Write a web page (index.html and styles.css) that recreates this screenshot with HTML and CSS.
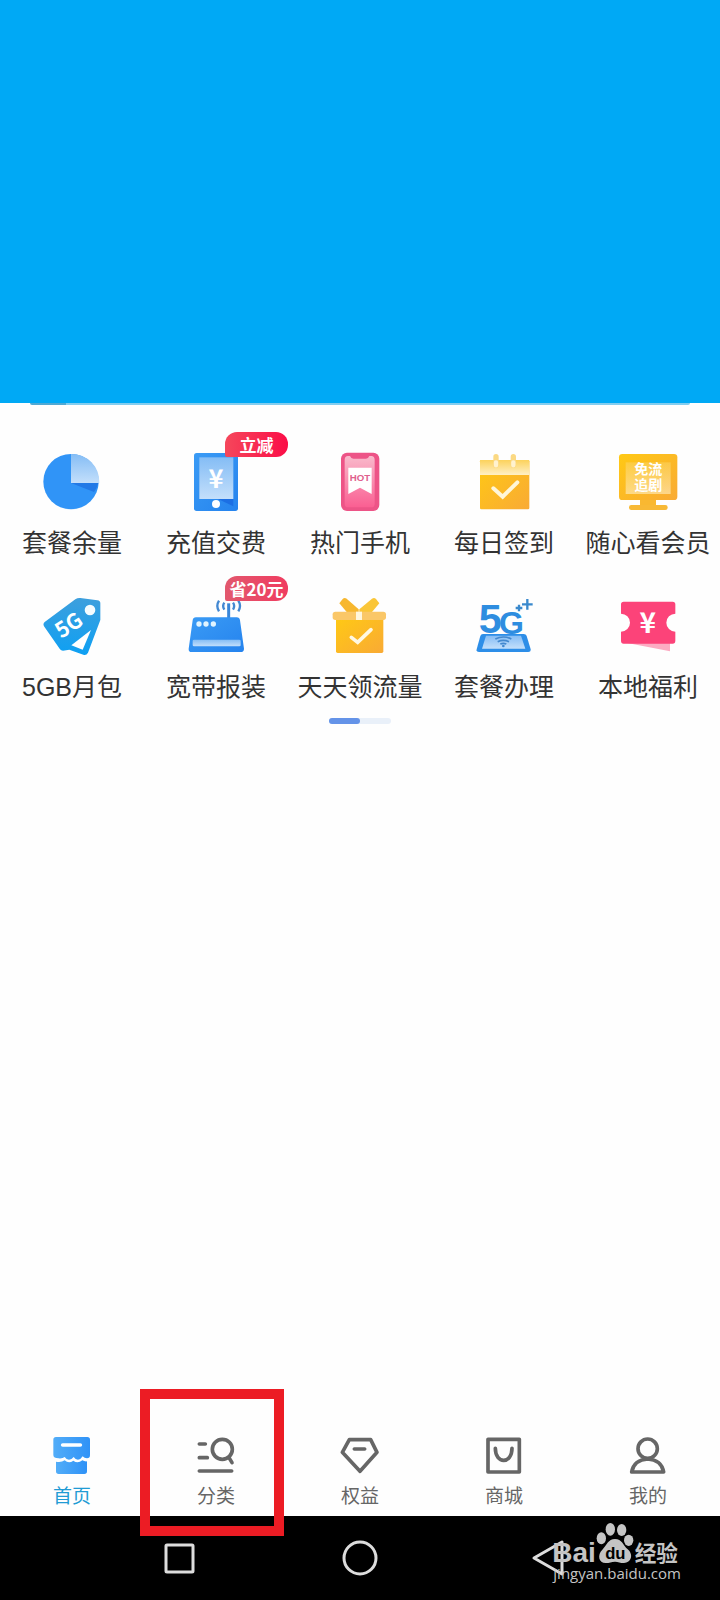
FILE: index.html
```html
<!DOCTYPE html>
<html lang="zh-CN">
<head>
  <meta charset="UTF-8">
  <meta name="viewport" content="width=device-width, initial-scale=1.0">
  <title>首页</title>
  <link rel="stylesheet" href="styles.css">
</head>
<body>

  <!-- Degradados compartidos por los iconos -->
  <svg class="defs" width="0" height="0" aria-hidden="true">
    <defs>
      <linearGradient id="blue" x1="0" y1="0" x2="1" y2="1"><stop offset="0" stop-color="#3a9bf5"/><stop offset="1" stop-color="#2583ee"/></linearGradient>
      <linearGradient id="cyan" x1="0" y1="0" x2="0" y2="1"><stop offset="0" stop-color="#3d9fdd"/><stop offset="1" stop-color="#0ea0f3"/></linearGradient>
      <linearGradient id="pale" x1="0" y1="0" x2="0" y2="1"><stop offset="0" stop-color="#85bdf5"/><stop offset="1" stop-color="#c3dffb"/></linearGradient>
      <linearGradient id="gold" x1="0" y1="0" x2="1" y2="1"><stop offset="0" stop-color="#ffc914"/><stop offset="1" stop-color="#f9aa35"/></linearGradient>
      <linearGradient id="cream" x1="0" y1="0" x2="0" y2="1"><stop offset="0" stop-color="#fcd25c"/><stop offset="1" stop-color="#fff0c6"/></linearGradient>
      <linearGradient id="pink" x1="0" y1="0" x2="0" y2="1"><stop offset="0" stop-color="#f9b9cb"/><stop offset="1" stop-color="#fa5f92"/></linearGradient>
      <linearGradient id="home" x1="0" y1="0" x2="1" y2="0"><stop offset="0" stop-color="#52adf8"/><stop offset="1" stop-color="#2f92f7"/></linearGradient>
    </defs>
  </svg>

  <header class="banner"></header>

  <main class="content">
    <div class="card-edge"></div>
    <div class="services">
      <button type="button" class="service">
        <span class="icon">
          <svg viewBox="0 0 180 180">
            <circle cx="87" cy="89" r="83" fill="#3094f7"/>
            <path d="M87 93H169Q165 108 156 120Z" fill="#2279e6"/>
            <path d="M87 6A83 83 0 0 1 172 93H87Z" fill="url(#pale)"/>
          </svg>
        </span>
        <span class="label">套餐余量</span>
      </button>
      <button type="button" class="service">
        <span class="icon">
          <svg viewBox="0 0 180 180">
            <rect x="24" y="3" width="132" height="174" rx="8" fill="url(#blue)"/>
            <path d="M96 141H142V163Z" fill="#1c6fe4"/>
            <rect x="40" y="16" width="102" height="125" fill="url(#pale)"/>
            <text x="90" y="107" font-size="76" class="mark">¥</text>
            <circle cx="90" cy="156" r="12" fill="#fff"/>
          </svg>
          <span class="badge">立减</span>
        </span>
        <span class="label">充值交费</span>
      </button>
      <button type="button" class="service">
        <span class="icon">
          <svg viewBox="0 0 180 180">
            <rect x="33" y="2" width="115" height="175" rx="18" fill="#ed5487"/>
            <path d="M44 24Q44 12 54 12H60Q63 20 70 20H108Q115 20 118 12H124Q134 12 134 24V155Q134 166 124 166H54Q44 166 44 155Z" fill="url(#pink)"/>
            <path d="M55 47H125V126L90 107L55 126Z" fill="#fff"/>
            <text x="90" y="87" font-size="29" class="mark hot">HOT</text>
          </svg>
        </span>
        <span class="label">热门手机</span>
      </button>
      <button type="button" class="service">
        <span class="icon">
          <svg viewBox="0 0 180 180">
            <rect x="18" y="24" width="148" height="148" rx="4" fill="url(#gold)"/>
            <path d="M22 24H162Q166 24 166 28V69H18V28Q18 24 22 24Z" fill="url(#cream)"/>
            <path d="M66 14V40M118 14V40" stroke="#fbd983" stroke-width="16" stroke-linecap="round"/>
            <path d="M66 31V40M118 31V40" stroke="#fff2cf" stroke-width="13" stroke-linecap="round"/>
            <path d="M58 109L86 134L130 91" fill="none" stroke="#fff6d8" stroke-width="12" stroke-linecap="round"/>
          </svg>
        </span>
        <span class="label">每日签到</span>
      </button>
      <button type="button" class="service">
        <span class="icon">
          <svg viewBox="0 0 180 180">
            <path d="M66 140H114V160H66Z" fill="#f9b831"/>
            <rect x="33" y="159" width="116" height="15" rx="7" fill="#f8b936"/>
            <rect x="3" y="6" width="175" height="138" rx="10" fill="url(#gold)"/>
            <rect x="23" y="31" width="135" height="95" fill="url(#cream)" opacity=".6"/>
            <text x="91" y="67" font-size="42" class="mark">免流</text>
            <text x="91" y="114" font-size="42" class="mark">追剧</text>
          </svg>
        </span>
        <span class="label">随心看会员</span>
      </button>
      <button type="button" class="service">
        <span class="icon">
          <svg viewBox="0 0 180 180">
            <path d="M8 78L100 10Q107 5 115 6L166 13Q175 14 175 22V72L138 170Q133 179 124 176L82 161L63 164Q57 164 54 160L6 91Q2 83 8 78Z" fill="url(#cyan)"/>
            <circle cx="144" cy="42" r="16" fill="#f4fcff"/>
            <path d="M147 102L88 148L122 161Z" fill="#fff"/>
            <text x="80" y="110" font-size="64" class="mark" transform="rotate(-33 80 87)">5G</text>
          </svg>
        </span>
        <span class="label">5GB月包</span>
      </button>
      <button type="button" class="service">
        <span class="icon">
          <svg viewBox="0 0 180 180">
            <path d="M128 22V68" stroke="#3a86d8" stroke-width="9"/>
            <path d="M115 20Q108 30 115 41M99 14Q89 30 99 46M141 20Q148 30 141 41M157 14Q167 30 157 46" fill="none" stroke="#4388d2" stroke-width="7"/>
            <path d="M30 64H152Q161 64 162 73L174 158Q174 168 164 168H17Q7 168 8 158L20 73Q21 64 30 64Z" fill="url(#blue)"/>
            <circle cx="39" cy="84" r="8" fill="#e0f4ff"/><circle cx="60" cy="84" r="8" fill="#e0f4ff"/><circle cx="82" cy="84" r="8" fill="#e0f4ff"/>
            <rect x="20" y="131" width="144" height="20" rx="4" fill="url(#pale)"/>
          </svg>
          <span class="badge soft">省20元</span>
        </span>
        <span class="label">宽带报装</span>
      </button>
      <button type="button" class="service">
        <span class="icon">
          <svg viewBox="0 0 180 180">
            <rect x="18" y="66" width="142" height="105" rx="5" fill="url(#gold)"/>
            <path d="M28 22L38 9Q43 4 50 8L86 40V48H50Z" fill="#f7b72e"/>
            <path d="M148 22L138 9Q133 4 126 8L88 40V48H126Z" fill="#fac638"/>
            <rect x="8" y="47" width="160" height="25" rx="8" fill="#fac768"/>
            <path d="M78 47H96V72H78Z" fill="#fff6dd"/>
            <path d="M64 124L83 139L123 101" fill="none" stroke="#fff8e2" stroke-width="11" stroke-linecap="round"/>
          </svg>
        </span>
        <span class="label">天天领流量</span>
      </button>
      <button type="button" class="service">
        <span class="icon">
          <svg viewBox="0 0 180 180">
            <path d="M27 114H149Q156 114 158 120L170 160Q171 168 163 168H15Q6 168 8 160L19 120Q21 114 27 114Z" fill="#2d8ee8"/>
            <path d="M36 119H141L154 158H24Z" fill="url(#pale)"/>
            <path d="M64 129Q88 117 112 129M71 137Q88 129 105 137M79 144Q88 140 97 144" fill="none" stroke="#4389cf" stroke-width="5"/>
            <circle cx="88" cy="150" r="4" fill="#4389cf"/>
            <text x="49" y="110" font-size="124" class="mark five">5</text>
            <text x="112" y="113" font-size="96" class="mark five">G</text>
            <path d="M135 26V46M125 36H145M160 9V41M144 25H176" stroke="#3a89cd" stroke-width="7"/>
          </svg>
        </span>
        <span class="label">套餐办理</span>
      </button>
      <button type="button" class="service">
        <span class="icon">
          <svg viewBox="0 0 180 180">
            <path d="M24 140L156 166V138Z" fill="#fcabc2"/>
            <path d="M17 17H164Q172 17 172 25V53A27 27 0 0 0 172 107V134Q172 143 164 143H17Q9 143 9 134V107A27 27 0 0 0 9 53V25Q9 17 17 17Z" fill="#fc4379"/>
            <text x="89" y="111" font-size="84" class="mark">¥</text>
          </svg>
        </span>
        <span class="label">本地福利</span>
      </button>
    </div>
    <div class="pager"><span class="pager-on"></span></div>
  </main>

  <nav class="tabs">
    <a href="#" class="tab active">
      <svg viewBox="0 0 120 120">
        <path d="M12 6H106Q114 6 114 14V60Q114 70 105 70Q97 70 92 64Q86 74 78 74Q70 74 65 66Q59 74 51 74Q43 74 38 66Q32 71 20 70Q4 70 4 60V14Q4 6 12 6Z" fill="url(#home)"/>
        <path d="M12 80Q28 83 38 76Q50 87 64 77Q77 87 91 76Q98 80 105 79V109Q105 117 97 117H20Q12 117 12 109Z" fill="url(#home)"/>
        <path d="M32 30H85" stroke="#fff" stroke-width="11" stroke-linecap="round"/>
      </svg>
      <span>首页</span>
    </a>
    <a href="#" class="tab marked">
      <svg viewBox="0 0 120 120" class="line">
        <path d="M10 27H28M10 68H34M10 108H107M99 68L108 83"/>
        <circle cx="79" cy="43" r="30"/>
      </svg>
      <span>分类</span>
    </a>
    <a href="#" class="tab">
      <svg viewBox="0 0 120 120" class="line">
        <path d="M28 14H92L111 52L60 109L7 52ZM43 42H74"/>
      </svg>
      <span>权益</span>
    </a>
    <a href="#" class="tab">
      <svg viewBox="0 0 120 120" class="line">
        <path d="M12 13H106V111H12ZM34 40C34 88 84 88 84 40"/>
      </svg>
      <span>商城</span>
    </a>
    <a href="#" class="tab">
      <svg viewBox="0 0 120 120" class="line">
        <circle cx="59" cy="41" r="29"/>
        <path d="M11 111H107Q100 74 59 72Q18 74 11 111Z"/>
      </svg>
      <span>我的</span>
    </a>
  </nav>

  <footer class="system">
    <button type="button" aria-label="最近"><svg viewBox="0 0 48 48"><rect x="10" y="11" width="27" height="27" rx="1"/></svg></button>
    <button type="button" aria-label="主页"><svg viewBox="0 0 48 48"><circle cx="24" cy="24" r="16"/></svg></button>
    <button type="button" aria-label="返回"><svg viewBox="0 0 48 48"><path d="M46 8V40L18 24Z"/></svg></button>
    <svg class="watermark" viewBox="0 0 384 180">
      <text x="1" y="121" font-size="84" class="brand latin">Bai</text>
      <ellipse cx="148" cy="49" rx="14" ry="18"/>
      <ellipse cx="175" cy="22" rx="14" ry="19"/>
      <ellipse cx="209" cy="24" rx="14" ry="18"/>
      <ellipse cx="230" cy="55" rx="14" ry="17"/>
      <path d="M189 51C210 51 213 69 227 82C246 98 237 123 216 123C204 123 199 119 189 119C178 119 173 123 161 123C140 123 135 99 151 83C165 69 168 51 189 51Z"/>
      <text x="190" y="110" font-size="50" class="du latin">du</text>
      <text x="248" y="116" font-size="65" class="brand">经验</text>
      <text x="4" y="170" font-size="45" class="site">jingyan.baidu.com</text>
    </svg>
  </footer>

</body>
</html>
```
FILE: styles.css
```css
body {
  margin: 0;
  min-height: 100vh;
  display: flex;
  flex-direction: column;
  background-color: #fefefe;
  font-family: "Noto Sans CJK SC", sans-serif;
  color: #333;
}

button {
  padding: 0;
  border: none;
  background: none;
  font-family: inherit;
  color: inherit;
  cursor: pointer;
}

svg {
  display: block;
}

.defs {
  position: absolute;
}

.banner {
  height: 403px;
  background-color: #00a9f5;
}

.content {
  flex: 1;
}

.card-edge {
  height: 2px;
  margin: 0 30px 47px;
  border-radius: 0 0 2px 2px;
  background: linear-gradient(to right, #4fa9d4 36px, #83cdef 36px);
}

.services {
  display: grid;
  grid-template-columns: repeat(5, 1fr);
  row-gap: 35px;
}

.service {
  display: flex;
  flex-direction: column;
  align-items: center;
  gap: 13px;
}

.icon {
  position: relative;
  width: 60px;
  height: 60px;
}

.label {
  font-family: "Liberation Sans", "Noto Sans CJK SC", sans-serif;
  font-size: 25px;
  line-height: 36px;
  white-space: nowrap;
}

.badge {
  position: absolute;
  left: 39px;
  top: -20px;
  width: 63px;
  border-radius: 12px 12px 12px 2px;
  background: linear-gradient(to right, #f5475b, #fb0d47);
  color: #fff;
  font-size: 17px;
  font-weight: 700;
  line-height: 25px;
  text-align: center;
  white-space: nowrap;
}

.soft {
  background: linear-gradient(to right, #e2586e, #f03c60);
}

.mark {
  fill: #fff;
  font-weight: 700;
  text-anchor: middle;
}

.hot {
  fill: #e0608d;
  font-family: "Liberation Sans", sans-serif;
}

.five {
  fill: #2e8de0;
  font-family: "Liberation Sans", sans-serif;
}

.pager {
  width: 62px;
  height: 6px;
  margin: 13px auto 0;
  border-radius: 3px;
  background-color: #e9f0f9;
}

.pager-on {
  display: block;
  width: 50%;
  height: 100%;
  border-radius: 3px;
  background-color: #6493e8;
}

.tabs {
  display: grid;
  grid-template-columns: repeat(5, 1fr);
  padding-bottom: 8px;
}

.tab {
  position: relative;
  display: flex;
  flex-direction: column;
  align-items: center;
  gap: 7px;
  color: #666;
  font-size: 19px;
  line-height: 26px;
  text-decoration: none;
}

.tab svg {
  width: 40px;
  height: 40px;
}

.active {
  color: #219bd4;
}

.line {
  fill: none;
  stroke: #666;
  stroke-width: 11;
  stroke-linecap: round;
  stroke-linejoin: round;
}

/* recuadro rojo sobre la pestaña */
.marked::after {
  content: "";
  position: absolute;
  z-index: 1;
  top: -46px;
  bottom: -28px;
  left: -4px;
  right: 4px;
  border: 10px solid #ec1c24;
}

.system {
  position: relative;
  display: grid;
  grid-template-columns: repeat(3, 1fr);
  justify-items: center;
  align-items: center;
  height: 84px;
  padding: 0 90px;
  background-color: #000;
}

.system button svg {
  width: 48px;
  height: 48px;
  fill: none;
  stroke: #ddd;
  stroke-width: 3;
  stroke-linejoin: round;
}

.watermark {
  position: absolute;
  right: 40px;
  top: 6px;
  width: 128px;
  height: 60px;
  overflow: visible;
  fill: #c4c4c4;
  pointer-events: none;
}

.brand {
  font-weight: 700;
}

.latin {
  font-family: "Liberation Sans", sans-serif;
}

.du {
  fill: #000;
  font-weight: 700;
  text-anchor: middle;
}

.site {
  font-family: "Open Sans", sans-serif;
}
```
